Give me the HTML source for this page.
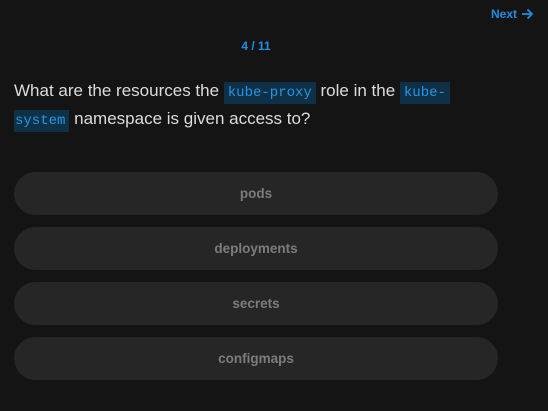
<!DOCTYPE html>
<html><head><style>
html,body{margin:0;padding:0;background:#141414;width:548px;height:411px;overflow:hidden;font-family:"Liberation Sans",sans-serif}
.next{position:absolute;left:491px;top:6px;color:#1a8fe3;font-weight:bold;font-size:12px;line-height:16px;display:flex;align-items:center;gap:4px}
.cnt{position:absolute;left:0;width:512px;top:38px;text-align:center;color:#1a8fe3;font-weight:bold;font-size:12px;line-height:16px}
.q{position:absolute;left:14px;top:78px;width:480px;color:#dcdcdc;font-size:17px;line-height:25px;white-space:nowrap}
code{font-family:"Liberation Mono",monospace;font-size:14px;background:#0f3147;color:#2596e6;padding:3px 4px}
.btn{position:absolute;left:14px;width:484px;height:43px;border-radius:22px;background:#262626;color:#7c7c7c;font-weight:bold;font-size:13.5px;line-height:43px;text-align:center}
</style></head><body>
<div class="next">Next <svg width="12" height="12" viewBox="0 0 12 12"><path d="M1 6H11M6.5 1.5L11 6L6.5 10.5" stroke="#1a8fe3" stroke-width="1.8" fill="none"/></svg></div>
<div class="cnt">4 / 11</div>
<div class="q">What are the resources the <code>kube-proxy</code> role in the <code>kube-</code><br><code style="padding-left:1px">system</code> namespace is given access to?</div>
<div class="btn" style="top:172px">pods</div>
<div class="btn" style="top:227px">deployments</div>
<div class="btn" style="top:282px">secrets</div>
<div class="btn" style="top:337px">configmaps</div>
</body></html>
